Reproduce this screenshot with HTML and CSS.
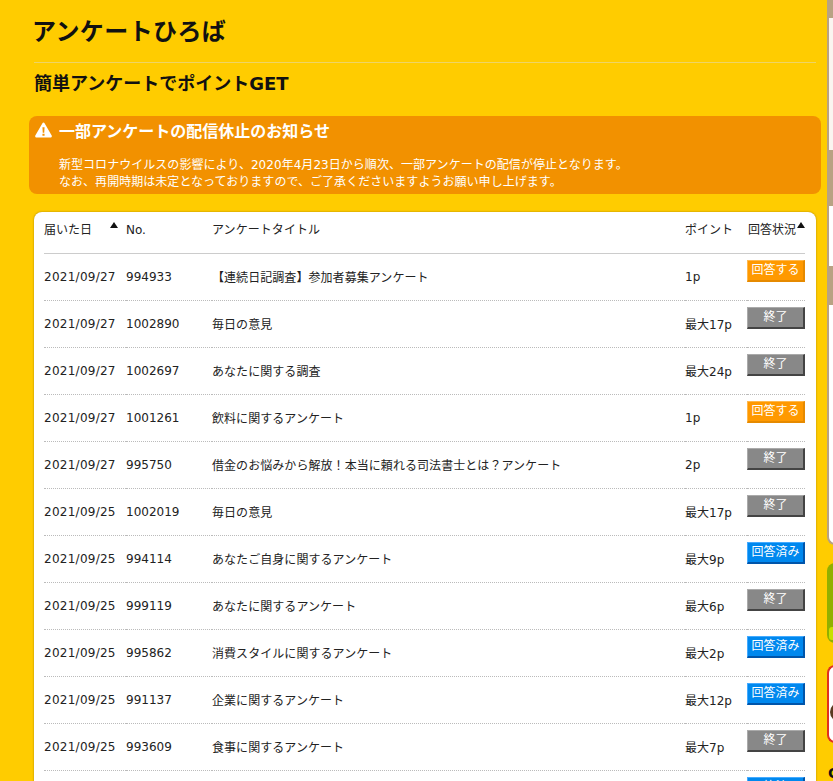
FILE: index.html
```html
<!DOCTYPE html>
<html lang="ja">
<head>
<meta charset="utf-8">
<title>アンケートひろば</title>
<link rel="stylesheet" href="styles.css">
</head>
<body>
<div class="layout">
  <main class="main">
    <h1 class="page-title">アンケートひろば</h1>
    <h2 class="sub-title">簡単アンケートでポイントGET</h2>
    <section class="notice">
      <h3 class="notice-title">
        <svg class="warn" viewBox="0 0 16 15" width="17" height="16"><path fill="#fff" fill-rule="evenodd" d="M8 0.5c.5 0 .8.3 1 .6l6.7 11.6c.4.8 0 1.8-1 1.8H1.3c-1 0-1.4-1-1-1.8L7 1.1c.2-.3.5-.6 1-.6zM7 5l.3 5h1.4L9 5H7zm0 6v2h2v-2H7z"/></svg>
        一部アンケートの配信休止のお知らせ
      </h3>
      <p class="notice-text">新型コロナウイルスの影響により、2020年4月23日から順次、一部アンケートの配信が停止となります。<br>なお、再開時期は未定となっておりますので、ご了承くださいますようお願い申し上げます。</p>
    </section>
    <section class="card">
      <table class="list">
        <thead>
          <tr>
            <th class="c-date"><span class="sort">届いた日<i class="arrow arrow-date"></i></span></th>
            <th class="c-no">No.</th>
            <th class="c-title">アンケートタイトル</th>
            <th class="c-point">ポイント</th>
            <th class="c-status"><span class="sort sort-status">回答状況<i class="arrow arrow-status"></i></span></th>
          </tr>
        </thead>
        <tbody>
          <tr><td class="c-date">2021/09/27</td><td>994933</td><td class="c-title">【連続日記調査】参加者募集アンケート</td><td>1p</td><td class="c-status"><a class="btn btn-open">回答する</a></td></tr>
          <tr><td class="c-date">2021/09/27</td><td>1002890</td><td class="c-title">毎日の意見</td><td>最大17p</td><td class="c-status"><a class="btn btn-end">終了</a></td></tr>
          <tr><td class="c-date">2021/09/27</td><td>1002697</td><td class="c-title">あなたに関する調査</td><td>最大24p</td><td class="c-status"><a class="btn btn-end">終了</a></td></tr>
          <tr><td class="c-date">2021/09/27</td><td>1001261</td><td class="c-title">飲料に関するアンケート</td><td>1p</td><td class="c-status"><a class="btn btn-open">回答する</a></td></tr>
          <tr><td class="c-date">2021/09/27</td><td>995750</td><td class="c-title">借金のお悩みから解放！本当に頼れる司法書士とは？アンケート</td><td>2p</td><td class="c-status"><a class="btn btn-end">終了</a></td></tr>
          <tr><td class="c-date">2021/09/25</td><td>1002019</td><td class="c-title">毎日の意見</td><td>最大17p</td><td class="c-status"><a class="btn btn-end">終了</a></td></tr>
          <tr><td class="c-date">2021/09/25</td><td>994114</td><td class="c-title">あなたご自身に関するアンケート</td><td>最大9p</td><td class="c-status"><a class="btn btn-done">回答済み</a></td></tr>
          <tr><td class="c-date">2021/09/25</td><td>999119</td><td class="c-title">あなたに関するアンケート</td><td>最大6p</td><td class="c-status"><a class="btn btn-end">終了</a></td></tr>
          <tr><td class="c-date">2021/09/25</td><td>995862</td><td class="c-title">消費スタイルに関するアンケート</td><td>最大2p</td><td class="c-status"><a class="btn btn-done">回答済み</a></td></tr>
          <tr><td class="c-date">2021/09/25</td><td>991137</td><td class="c-title">企業に関するアンケート</td><td>最大12p</td><td class="c-status"><a class="btn btn-done">回答済み</a></td></tr>
          <tr><td class="c-date">2021/09/25</td><td>993609</td><td class="c-title">食事に関するアンケート</td><td>最大7p</td><td class="c-status"><a class="btn btn-end">終了</a></td></tr>
          <tr><td></td><td></td><td></td><td></td><td class="c-status"><a class="btn btn-done">回答済み</a></td></tr>
        </tbody>
      </table>
    </section>
  </main>
  <aside class="side">
    <div class="side-card">
      <div class="band band-tan band-1"></div>
      <div class="band band-cream band-2"></div>
      <div class="band band-tan band-3"></div>
      <div class="band band-white band-4"></div>
      <div class="band band-tan band-5"></div>
      <div class="band band-white band-6"></div>
    </div>
    <div class="side-green"><div class="side-lime"></div></div>
    <div class="side-red"><div class="side-dot"></div></div>
    <div class="side-text">C</div>
  </aside>
</div>
</body>
</html>
```

FILE: styles.css
```css
* { box-sizing: border-box; }
html, body { margin: 0; padding: 0; height: 100%; overflow: hidden; background: #ffcc00; }
body { font-family: "DejaVu Sans", "Noto Sans CJK JP", sans-serif; color: #111; }

.layout { display: flex; width: 1133px; height: 781px; overflow: hidden; }
.main { flex: 0 0 827px; padding: 0 6px 0 29px; }

.page-title {
  margin: 0 5px 0 5px;
  height: 63px;
  padding-top: 15px;
  font-size: 24px;
  line-height: 34px;
  font-weight: 700;
  font-family: "Liberation Sans", "Noto Sans CJK JP", sans-serif;
  color: #111;
  border-bottom: 1px solid #eed466;
  text-indent: -2px;
  letter-spacing: .4px;
}
.sub-title {
  margin: 0 0 0 5px;
  padding-top: 8px;
  height: 53px;
  font-size: 18px;
  line-height: 26px;
  font-weight: 700;
  font-family: "DejaVu Sans", "Noto Sans CJK JP", sans-serif;
  color: #111;
}

.notice {
  height: 78px;
  background: #f29100;
  border-radius: 8px;
  color: #fff;
  padding: 3px 8px 0 6px;
}
.notice-title {
  display: flex;
  align-items: center;
  gap: 7px;
  margin: 0;
  font-size: 16px;
  line-height: 22px;
  font-weight: 700;
  font-family: "Noto Sans CJK JP", sans-serif;
}
.warn { flex: none; }
.notice-text {
  margin: 16px 0 0 24px;
  font-size: 12px;
  line-height: 16.5px;
  letter-spacing: .04px;
}

.card {
  margin: 18px 0 0 5px;
  width: 782px;
  background: #fff;
  border-radius: 8px 8px 0 0;
  padding: 0 11px 0 10px;
  box-shadow: 0 0 2px rgba(120, 90, 0, .7);
}
.list { width: 761px; table-layout: fixed; border-collapse: collapse; font-size: 12px; }
.list th, .list td { padding: 0; text-align: left; font-weight: 400; vertical-align: middle; color: #222; }
.list thead tr { height: 41px; border-bottom: 1px solid #ccc; }
.list tbody tr { height: 47px; border-bottom: 1px dotted #bbb; }
.list th { vertical-align: top; padding-top: 10px; line-height: 17px; }
.c-date { width: 82px; letter-spacing: .26px; }
.c-no { width: 86px; }
.c-title { width: 473px; letter-spacing: .06px; }
.c-point { width: 62px; }
.c-status { width: 58px; }
.list th.c-date, .list th.c-status { letter-spacing: 0; }
.list td.c-status { vertical-align: top; padding-top: 6px; }

.sort { position: relative; display: inline-block; }
.sort-status { margin-left: 1px; }
.arrow {
  position: absolute;
  width: 0; height: 0;
  border-left: 4px solid transparent;
  border-right: 4px solid transparent;
  border-bottom: 6px solid #111;
}
.arrow-date { left: 66px; top: 0; }
.arrow-status { left: 49px; top: 0; }

.btn {
  display: block;
  width: 58px;
  height: 22px;
  font-size: 12px;
  line-height: 18px;
  text-align: center;
  color: #fff;
  border-style: solid;
  border-width: 1px 2px 2px 1px;
}
.btn-open { background: #ff9900; border-color: #ffb84d #e68a00 #e68a00 #ffb84d; }
.btn-end { background: #888; border-color: #aaa #444 #444 #aaa; }
.btn-done { background: #0088ee; border-color: #44aaff #0055aa #0055aa #44aaff; }

.side { flex: 0 0 306px; }
.side-card {
  height: 545px;
  background: #fff;
  border-left: 2px solid #b8a283;
  border-bottom: 2px solid #b8a283;
  border-radius: 0 0 0 8px;
  overflow: hidden;
  margin-bottom: 18px;
}
.band { margin-left: -2px; }
.band-tan { background: #b8a283; }
.band-cream { background: #faf5f0; margin-left: 0; }
.band-white { background: #fff; margin-left: 0; }
.band-1 { height: 18px; }
.band-2 { height: 132px; }
.band-3 { height: 56px; }
.band-4 { height: 60px; }
.band-5 { height: 39px; }
.band-6 { height: 230px; }

.side-green {
  height: 80px;
  background: #90b000;
  border-radius: 8px 0 0 8px;
  padding: 64px 0 3px 2px;
  margin-bottom: 22px;
}
.side-lime { height: 13px; background: #c8e000; border-radius: 3px 0 0 3px; }

.side-red {
  height: 78px;
  background: #fff;
  border: 2px solid #e03020;
  border-right: 0;
  border-radius: 8px 0 0 8px;
  padding: 35px 0 0 1px;
  margin-bottom: 22px;
}
.side-dot { width: 20px; height: 20px; border-radius: 50%; background: #5a3a20; }
.side-text { font-size: 14px; line-height: 16px; font-weight: 700; color: #111; padding-left: 1px; }
```
